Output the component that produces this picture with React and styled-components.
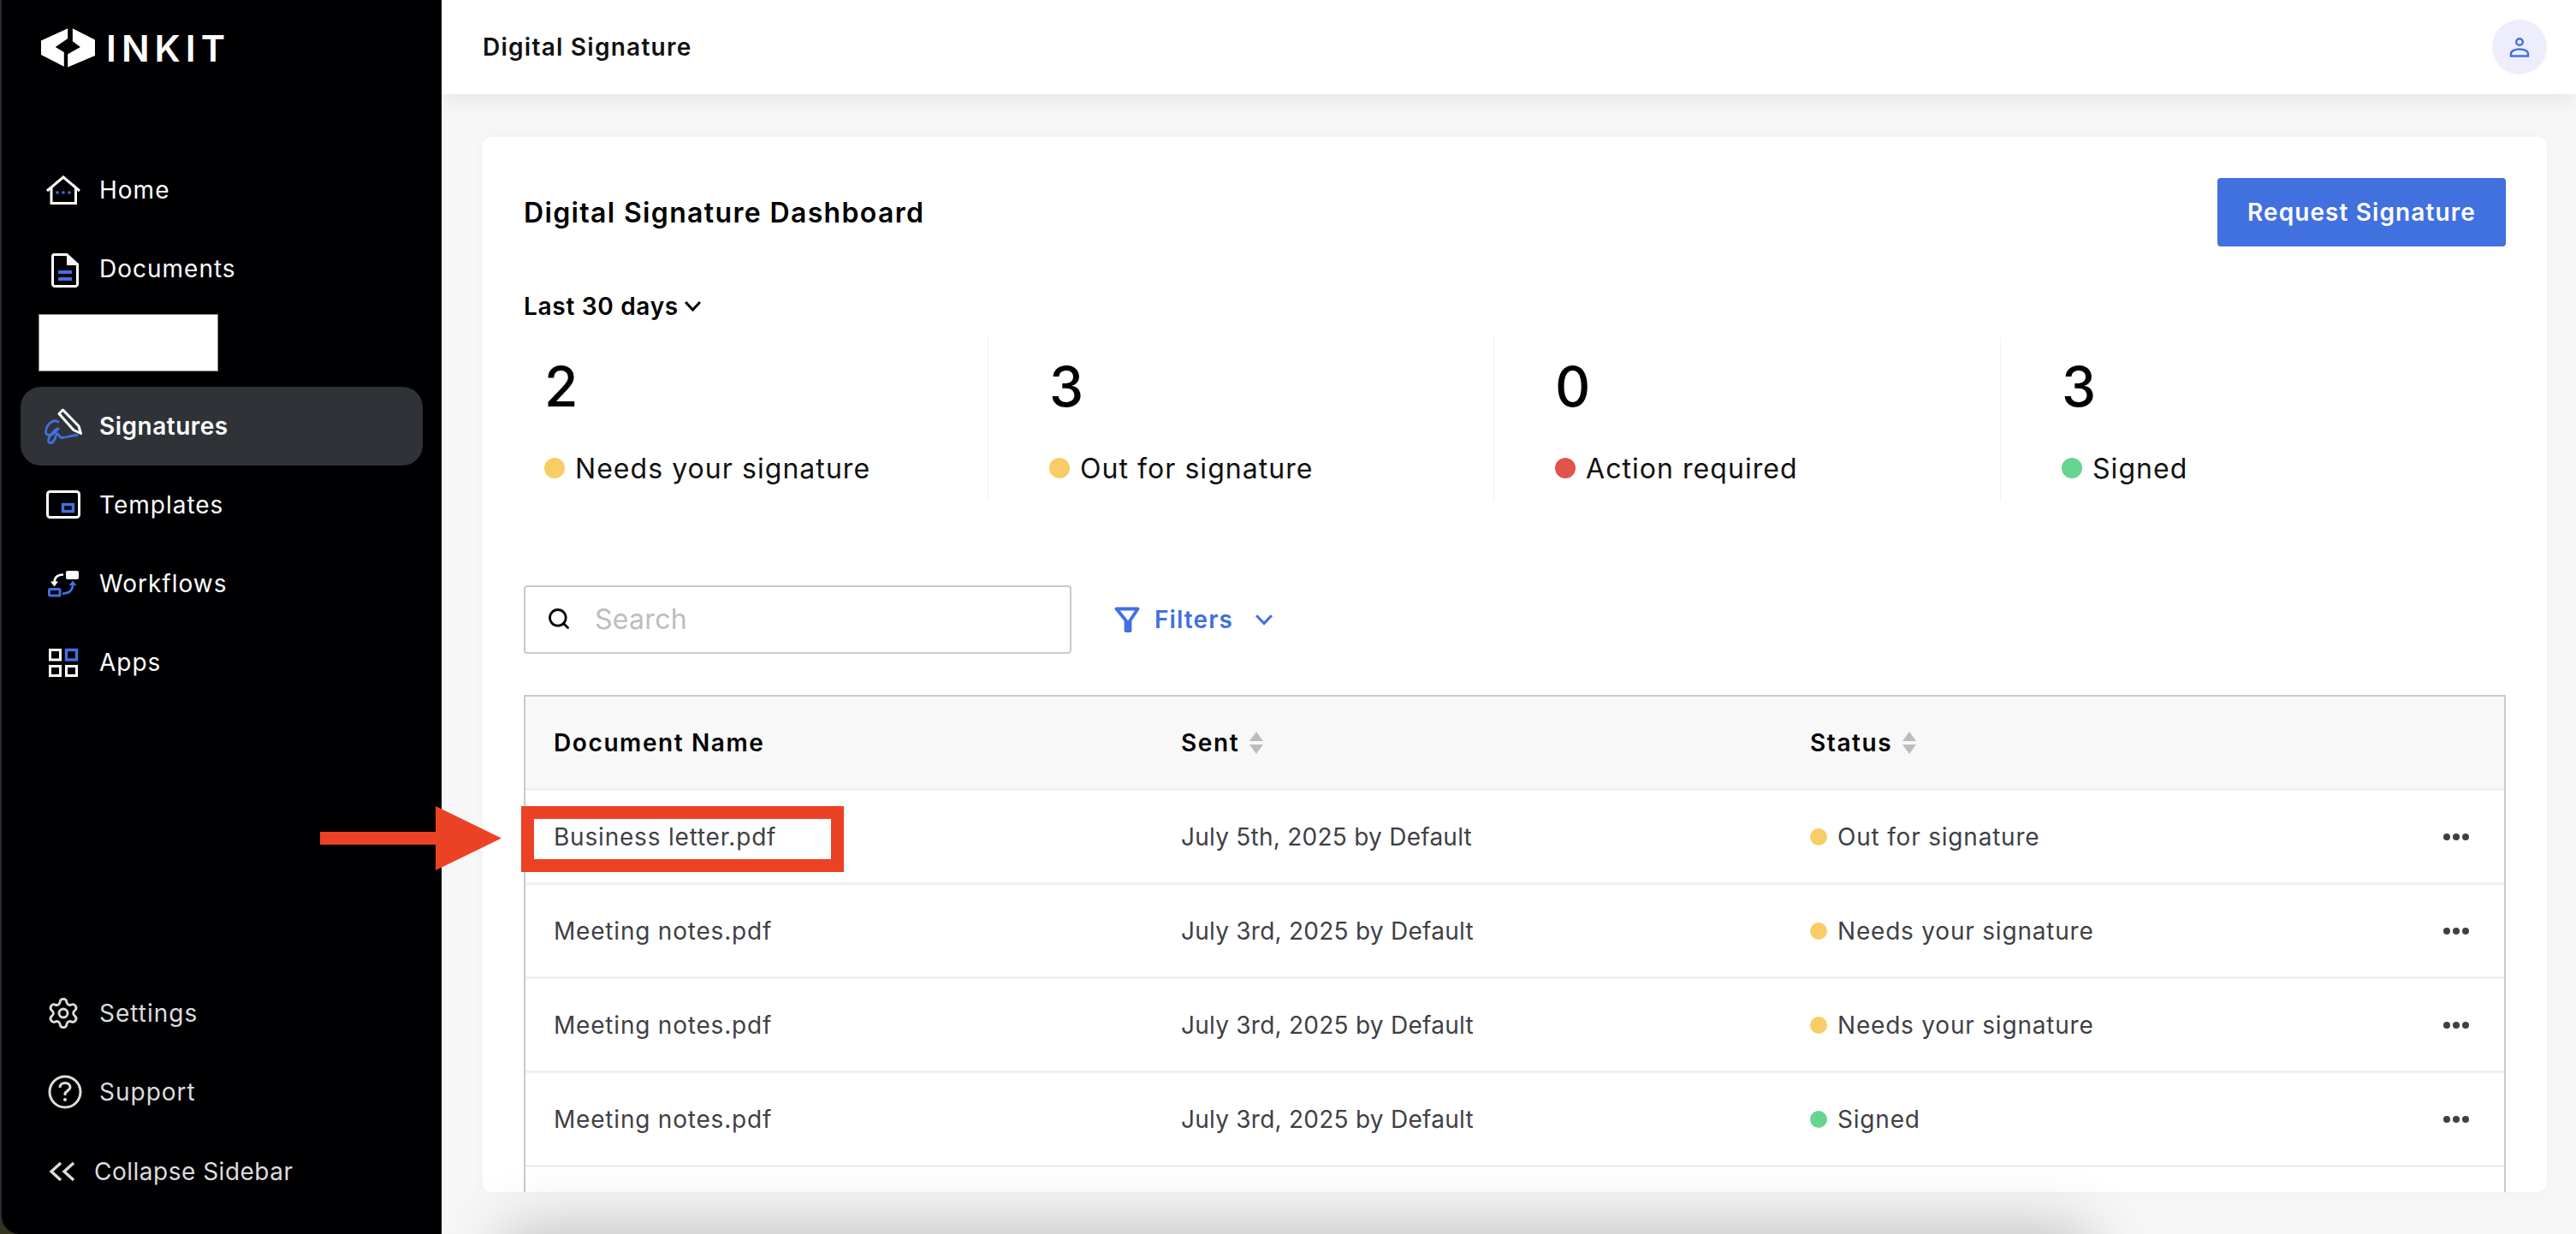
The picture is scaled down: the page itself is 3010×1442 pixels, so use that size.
import React from "react";
import styled, { createGlobalStyle } from "styled-components";
import { Search, Settings } from "lucide-react";

const FONT = `Inter, "Liberation Sans", sans-serif`;
const BLUE = "#4170df";

const GlobalStyle = createGlobalStyle`
  html, body {
    margin: 0;
    padding: 0;
    height: 100%;
    overflow: hidden;
    background: #f7f7f7;
    font-family: ${FONT};
  }
  #root { height: 100%; }
  * { box-sizing: border-box; }
`;

const Shell = styled.div`
  position: relative;
  display: flex;
  width: 100%;
  height: 100vh;
  overflow: hidden;
  background: #35341f;
`;

const Sidebar = styled.aside`
  width: 516px;
  flex: none;
  display: flex;
  flex-direction: column;
  background: #000003;
  border-left: 2px solid #2a2a2c;
  border-bottom-left-radius: 22px;
  padding: 0 22px 26px 22px;
`;

const Logo = styled.div`
  display: flex;
  align-items: center;
  gap: 13px;
  height: 110px;
  padding: 2px 0 0 24px;
  color: #fff;
`;

const LogoText = styled.span`
  font-size: 43px;
  font-weight: 600;
  letter-spacing: 6px;
  line-height: 1;
`;

const Nav = styled.nav`
  display: flex;
  flex-direction: column;
  margin-top: 66px;
`;

const BottomNav = styled(Nav)`
  margin-top: auto;
`;

const NavItem = styled.a`
  display: flex;
  align-items: center;
  height: ${(p) => (p.$short ? "94px" : "92px")};
  padding-left: ${(p) => p.$pad ?? 26}px;
  gap: ${(p) => p.$gap ?? 18}px;
  border-radius: 24px;
  color: ${(p) => (p.$muted ? "#dcdcdc" : "#fff")};
  background: ${(p) => (p.$active ? "#2f3237" : "transparent")};
  font-size: 28px;
  font-weight: ${(p) => (p.$active ? 600 : 400)};
  letter-spacing: ${(p) => p.$spacing ?? 1}px;
`;

const Redacted = styled.div`
  width: 210px;
  height: 67px;
  margin: 7px 0 18px 21px;
  background: #fff;
  border: 1px solid #8d8d90;
`;

const Main = styled.main`
  flex: 1;
  min-width: 0;
  display: flex;
  flex-direction: column;
  background: #f7f7f7;
`;

const TopBar = styled.header`
  position: relative;
  z-index: 1;
  flex: none;
  height: 110px;
  display: flex;
  align-items: center;
  justify-content: space-between;
  padding: 0 34px 0 48px;
  background: #fff;
  box-shadow: 0 4px 26px rgba(0, 0, 0, 0.09);
`;

const PageTitle = styled.h1`
  margin: 0;
  font-size: 28px;
  font-weight: 600;
  letter-spacing: 1.25px;
  color: #111;
`;

const Avatar = styled.div`
  width: 64px;
  height: 64px;
  border-radius: 50%;
  background: #eeedfb;
  display: flex;
  align-items: center;
  justify-content: center;
`;

const Content = styled.div`
  flex: 1;
  min-height: 0;
  display: flex;
  padding: 50px 34px 49px 48px;
`;

const Card = styled.section`
  flex: 1;
  min-width: 0;
  overflow: hidden;
  padding: 48px 48px 0;
  background: #fff;
  border-radius: 10px;
  box-shadow: 0 0 18px rgba(0, 0, 0, 0.03);
`;

const CardHeader = styled.div`
  display: flex;
  align-items: center;
  justify-content: space-between;
`;

const CardTitle = styled.h2`
  margin: 0;
  font-size: 32px;
  font-weight: 600;
  letter-spacing: 1.35px;
  color: #000;
`;

const PrimaryButton = styled.button`
  width: 337px;
  height: 80px;
  border: none;
  border-radius: 4px;
  background: ${BLUE};
  color: #fff;
  font-family: inherit;
  font-size: 28px;
  font-weight: 600;
  letter-spacing: 1.1px;
`;

const RangePicker = styled.div`
  display: flex;
  align-items: center;
  gap: 6px;
  height: 34px;
  margin-top: 53px;
  font-size: 28px;
  font-weight: 600;
  letter-spacing: 0.7px;
  color: #000;
`;

const Stats = styled.div`
  display: grid;
  grid-template-columns: 542px 591px 592px 1fr;
  height: 191px;
  margin-top: 19px;
`;

const Stat = styled.div`
  padding: 23px 0 0 71px;
  border-left: 1px solid #f1f1f1;

  &:first-child {
    padding-left: 24px;
    border-left: none;
  }
`;

const StatValue = styled.div`
  font-size: 64px;
  line-height: 70px;
  font-weight: 500;
  color: #000;
`;

const StatLabel = styled.div`
  display: flex;
  align-items: center;
  gap: 12px;
  height: 40px;
  margin-top: 40px;
  font-size: 32px;
  letter-spacing: 1.05px;
  color: #111;
`;

const Dot = styled.span`
  flex: none;
  width: ${(p) => p.$size}px;
  height: ${(p) => p.$size}px;
  border-radius: 50%;
  background: ${(p) => p.$color};
`;

const Toolbar = styled.div`
  display: flex;
  align-items: center;
  gap: 50px;
  margin-top: 99px;
`;

const SearchBox = styled.label`
  width: 640px;
  height: 80px;
  display: flex;
  align-items: center;
  gap: 28px;
  padding: 0 0 2px 25px;
  border: 2px solid #cacaca;
  border-radius: 4px;
`;

const SearchInput = styled.input`
  flex: 1;
  min-width: 0;
  border: none;
  outline: none;
  padding: 0;
  font-family: inherit;
  font-size: 32px;
  letter-spacing: 0.3px;
  color: #111;

  &::placeholder {
    color: #bdbdbd;
  }
`;

const FilterButton = styled.div`
  display: flex;
  align-items: center;
  gap: 17px;
  color: ${BLUE};
  font-size: 28px;
  font-weight: 600;
  letter-spacing: 1.1px;
`;

const FilterChevron = styled.span`
  display: flex;
  margin-left: 8px;
`;

const Table = styled.div`
  margin-top: 48px;
  border: 2px solid #cacaca;
  border-bottom: none;
`;

const Row = styled.div`
  display: grid;
  grid-template-columns: 733px 735px 1fr 71px;
  align-items: center;
  height: 110px;
  padding-left: 33px;
  border-bottom: 3px solid #f0f0f0;
  font-size: 28px;
  letter-spacing: 0.8px;
  color: #3f3f46;
`;

const HeadRow = styled(Row)`
  background: #f8f8f8;
  font-weight: 600;
  letter-spacing: 1.6px;
  color: #000;
`;

const HeadCell = styled.div`
  display: flex;
  align-items: center;
  gap: 12px;
`;

const DateCell = styled.div`
  letter-spacing: 0.25px;
`;

const StatusCell = styled.div`
  display: flex;
  align-items: center;
  gap: 12px;
`;

const MoreDots = styled.div`
  display: flex;
  gap: 3px;
`;

const MoreDot = styled.span`
  width: 8px;
  height: 8px;
  border-radius: 50%;
  background: #3f3f46;
`;

const ArrowMark = styled.svg`
  position: absolute;
  left: 374px;
  top: 942px;
`;

const Highlight = styled.div`
  position: absolute;
  left: 609px;
  top: 942px;
  width: 377px;
  height: 77px;
  border: 15px solid #eb4225;
`;

const BottomGlow = styled.div`
  position: absolute;
  left: 600px;
  top: 1454px;
  width: 1830px;
  height: 40px;
  box-shadow: 0 0 76px 10px rgba(0, 0, 0, 0.3);
  pointer-events: none;
`;

const IconBox = styled.svg`
  flex: none;
  width: 48px;
  height: 48px;
`;

const GearBox = styled.span`
  flex: none;
  width: 48px;
  height: 48px;
  display: flex;
  align-items: center;
  justify-content: center;
`;

const HomeIcon = () => (
  <IconBox viewBox="0 0 48 48" fill="none">
    <path d="M5 25 L24 9 L43 25" stroke="#fff" strokeWidth="3" />
    <path d="M10 21 V39.5 H38.5 V21" stroke="#fff" strokeWidth="3" />
    <circle cx="17" cy="27" r="1.8" fill={BLUE} />
    <circle cx="24" cy="27" r="1.8" fill={BLUE} />
    <circle cx="31" cy="27" r="1.8" fill={BLUE} />
  </IconBox>
);

const DocIcon = () => (
  <IconBox viewBox="0 0 48 48" fill="none">
    <path d="M13.5 7.5 H28 L40.5 19 V42 a2.5 2.5 0 0 1 -2.5 2.5 H14 a2.5 2.5 0 0 1 -2.5 -2.5 V9.5 a2 2 0 0 1 2 -2 Z" stroke="#fff" strokeWidth="3" />
    <path d="M28 7 L41 18 V20 H28 Z" fill="#f4f4f4" />
    <rect x="18" y="26" width="16" height="4" fill={BLUE} />
    <rect x="18" y="34" width="16" height="4" fill={BLUE} />
  </IconBox>
);

const SignIcon = () => (
  <IconBox viewBox="0 0 48 48" fill="none">
    <path d="M19 9.5 L23.5 5 L42 24 L44.5 32.5 L36 28.5 Z" stroke="#fff" strokeWidth="3" strokeLinejoin="round" />
    <path d="M18 19 C12 15 4 22 3.5 31 C3.5 36 12 36 18 27 C16 26 8 34 6.5 40 C6 45 11 45 14 39 C15 36 16 33 17 33 C19 33 19 38 23 37.5 C28 37 33 35 40 34.5" stroke={BLUE} strokeWidth="2.8" strokeLinecap="round" />
  </IconBox>
);

const TemplateIcon = () => (
  <IconBox viewBox="0 0 48 48" fill="none">
    <rect x="5.5" y="8.5" width="37" height="30" rx="3" stroke="#fff" strokeWidth="3" />
    <rect x="23.5" y="23.5" width="12" height="8" stroke={BLUE} strokeWidth="3.4" />
  </IconBox>
);

const FlowIcon = () => (
  <IconBox viewBox="0 0 48 48" fill="none">
    <rect x="27" y="9" width="15" height="10" rx="2" fill="#fff" />
    <rect x="7.5" y="30.5" width="12.5" height="7.5" rx="1" stroke={BLUE} strokeWidth="3" />
    <path d="M24 13.5 C18 13.5 13.5 16 13.5 23" stroke="#fff" strokeWidth="2.6" />
    <path d="M9 21.5 H18 L13.5 27.5 Z" fill="#fff" />
    <path d="M23 35.5 C30 36 35 32 35 25" stroke={BLUE} strokeWidth="2.8" />
    <path d="M30.5 26 H39.5 L35 20.5 Z" fill={BLUE} />
  </IconBox>
);

const AppsIcon = () => (
  <IconBox viewBox="0 0 48 48" fill="none">
    <rect x="8.5" y="9.5" width="12" height="11.5" stroke="#fff" strokeWidth="3" />
    <rect x="27.5" y="9.5" width="12" height="11.5" stroke={BLUE} strokeWidth="3.4" />
    <rect x="8.5" y="28.5" width="12" height="11" stroke="#fff" strokeWidth="3" />
    <rect x="27.5" y="28.5" width="12" height="11" stroke="#fff" strokeWidth="3" />
  </IconBox>
);

const HelpIcon = () => (
  <IconBox viewBox="0 0 48 48" fill="none">
    <circle cx="26" cy="24" r="18" stroke="#dcdcdc" strokeWidth="3" />
    <path d="M20 19 C20 15 23 13.5 26 13.5 C30 13.5 32 16 32 18.5 C32 22 27 23 26 26 V28" stroke="#dcdcdc" strokeWidth="3" />
    <circle cx="26" cy="33" r="2" fill="#dcdcdc" />
  </IconBox>
);

const CollapseIcon = () => (
  <svg width="34" height="24" viewBox="0 0 34 24" fill="none">
    <path d="M15 2 L4 12 L15 22" stroke="#dcdcdc" strokeWidth="3.4" />
    <path d="M30 2 L19 12 L30 22" stroke="#dcdcdc" strokeWidth="3.4" />
  </svg>
);

const LogoMark = () => (
  <svg width="63" height="46" viewBox="55 65 188 136">
    <path d="M148 65 V100 L105 130 L135 148 V198 L55 157 V108 Z" fill="#fff" />
    <path d="M165 65 L243 105 V160 L148 200 V155 L192 130 L165 110 Z" fill="#fff" />
  </svg>
);

const PersonIcon = () => (
  <svg width="24" height="24" viewBox="0 0 24 24" fill="none" stroke={BLUE} strokeWidth="2.4">
    <circle cx="12" cy="6" r="3.8" />
    <path d="M2 22.5 V20 C2 16.5 7 14.5 12 14.5 C17 14.5 22 16.5 22 20 V22.5 Z" />
  </svg>
);

const Chevron = ({ size, color }) => (
  <svg width={size} height={size * 0.65} viewBox="0 0 20 13" fill="none">
    <path d="M2 2 L10 10.5 L18 2" stroke={color} strokeWidth="2.8" />
  </svg>
);

const FunnelIcon = () => (
  <svg width="30" height="31" viewBox="0 0 30 31" fill="none">
    <path d="M2.5 2.5 H27.5 L18.5 16 V28 H13.5 V16 Z" stroke={BLUE} strokeWidth="3.8" strokeLinejoin="round" />
    <path d="M13.5 16 H18.5 V28 H13.5 Z" fill={BLUE} />
  </svg>
);

const SortIcon = () => (
  <svg width="16" height="26" viewBox="0 0 16 26">
    <path d="M8 0 L16 11 H0 Z" fill="#bcbcbc" />
    <path d="M8 26 L16 15 H0 Z" fill="#bcbcbc" />
  </svg>
);

const STATUS_COLORS = {
  "Out for signature": "#f8cd65",
  "Needs your signature": "#f8cd65",
  "Action required": "#e2534c",
  Signed: "#66d592",
};

const NAV = [
  ["Home", <HomeIcon />],
  ["Documents", <DocIcon />],
  null,
  ["Signatures", <SignIcon />, true],
  ["Templates", <TemplateIcon />],
  ["Workflows", <FlowIcon />],
  ["Apps", <AppsIcon />],
];

const STATS = [
  [2, "Needs your signature"],
  [3, "Out for signature"],
  [0, "Action required"],
  [3, "Signed"],
];

const DOCS = [
  ["Business letter.pdf", "July 5th, 2025 by Default", "Out for signature"],
  ["Meeting notes.pdf", "July 3rd, 2025 by Default", "Needs your signature"],
  ["Meeting notes.pdf", "July 3rd, 2025 by Default", "Needs your signature"],
  ["Meeting notes.pdf", "July 3rd, 2025 by Default", "Signed"],
];

export default function App() {
  return (
    <Shell>
      <GlobalStyle />
      <Sidebar>
        <Logo>
          <LogoMark />
          <LogoText>INKIT</LogoText>
        </Logo>
        <Nav>
          {NAV.map((item, i) =>
            item ? (
              <NavItem key={item[0]} $active={item[2]} $spacing={item[2] ? 0.5 : 1}>
                {item[1]}
                {item[0]}
              </NavItem>
            ) : (
              <Redacted key={i} />
            )
          )}
        </Nav>
        <BottomNav>
          <NavItem $muted>
            <GearBox>
              <Settings size={40} strokeWidth={1.7} color="#dcdcdc" />
            </GearBox>
            Settings
          </NavItem>
          <NavItem $muted>
            <HelpIcon />
            Support
          </NavItem>
          <NavItem $muted $short $pad={32} $gap={20} $spacing={0.5}>
            <CollapseIcon />
            Collapse Sidebar
          </NavItem>
        </BottomNav>
      </Sidebar>
      <Main>
        <TopBar>
          <PageTitle>Digital Signature</PageTitle>
          <Avatar>
            <PersonIcon />
          </Avatar>
        </TopBar>
        <Content>
          <Card>
            <CardHeader>
              <CardTitle>Digital Signature Dashboard</CardTitle>
              <PrimaryButton>Request Signature</PrimaryButton>
            </CardHeader>
            <RangePicker>
              Last 30 days
              <Chevron size={21} color="#000" />
            </RangePicker>
            <Stats>
              {STATS.map(([value, label]) => (
                <Stat key={label}>
                  <StatValue>{value}</StatValue>
                  <StatLabel>
                    <Dot $size={24} $color={STATUS_COLORS[label]} />
                    {label}
                  </StatLabel>
                </Stat>
              ))}
            </Stats>
            <Toolbar>
              <SearchBox>
                <Search size={28} color="#000" strokeWidth={2.4} />
                <SearchInput placeholder="Search" />
              </SearchBox>
              <FilterButton>
                <FunnelIcon />
                Filters
                <FilterChevron>
                  <Chevron size={22} color={BLUE} />
                </FilterChevron>
              </FilterButton>
            </Toolbar>
            <Table>
              <HeadRow>
                <HeadCell>Document Name</HeadCell>
                <HeadCell>
                  Sent
                  <SortIcon />
                </HeadCell>
                <HeadCell>
                  Status
                  <SortIcon />
                </HeadCell>
              </HeadRow>
              {DOCS.map(([name, sent, status], i) => (
                <Row key={i}>
                  <div>{name}</div>
                  <DateCell>{sent}</DateCell>
                  <StatusCell>
                    <Dot $size={20} $color={STATUS_COLORS[status]} />
                    {status}
                  </StatusCell>
                  <MoreDots>
                    <MoreDot />
                    <MoreDot />
                    <MoreDot />
                  </MoreDots>
                </Row>
              ))}
              <Row />
            </Table>
          </Card>
        </Content>
      </Main>
      <ArrowMark width="212" height="76" viewBox="0 0 212 76">
        <path d="M0 30 H135 V0 L212 37.5 L135 75 V45 H0 Z" fill="#eb4225" />
      </ArrowMark>
      <Highlight />
      <BottomGlow />
    </Shell>
  );
}
